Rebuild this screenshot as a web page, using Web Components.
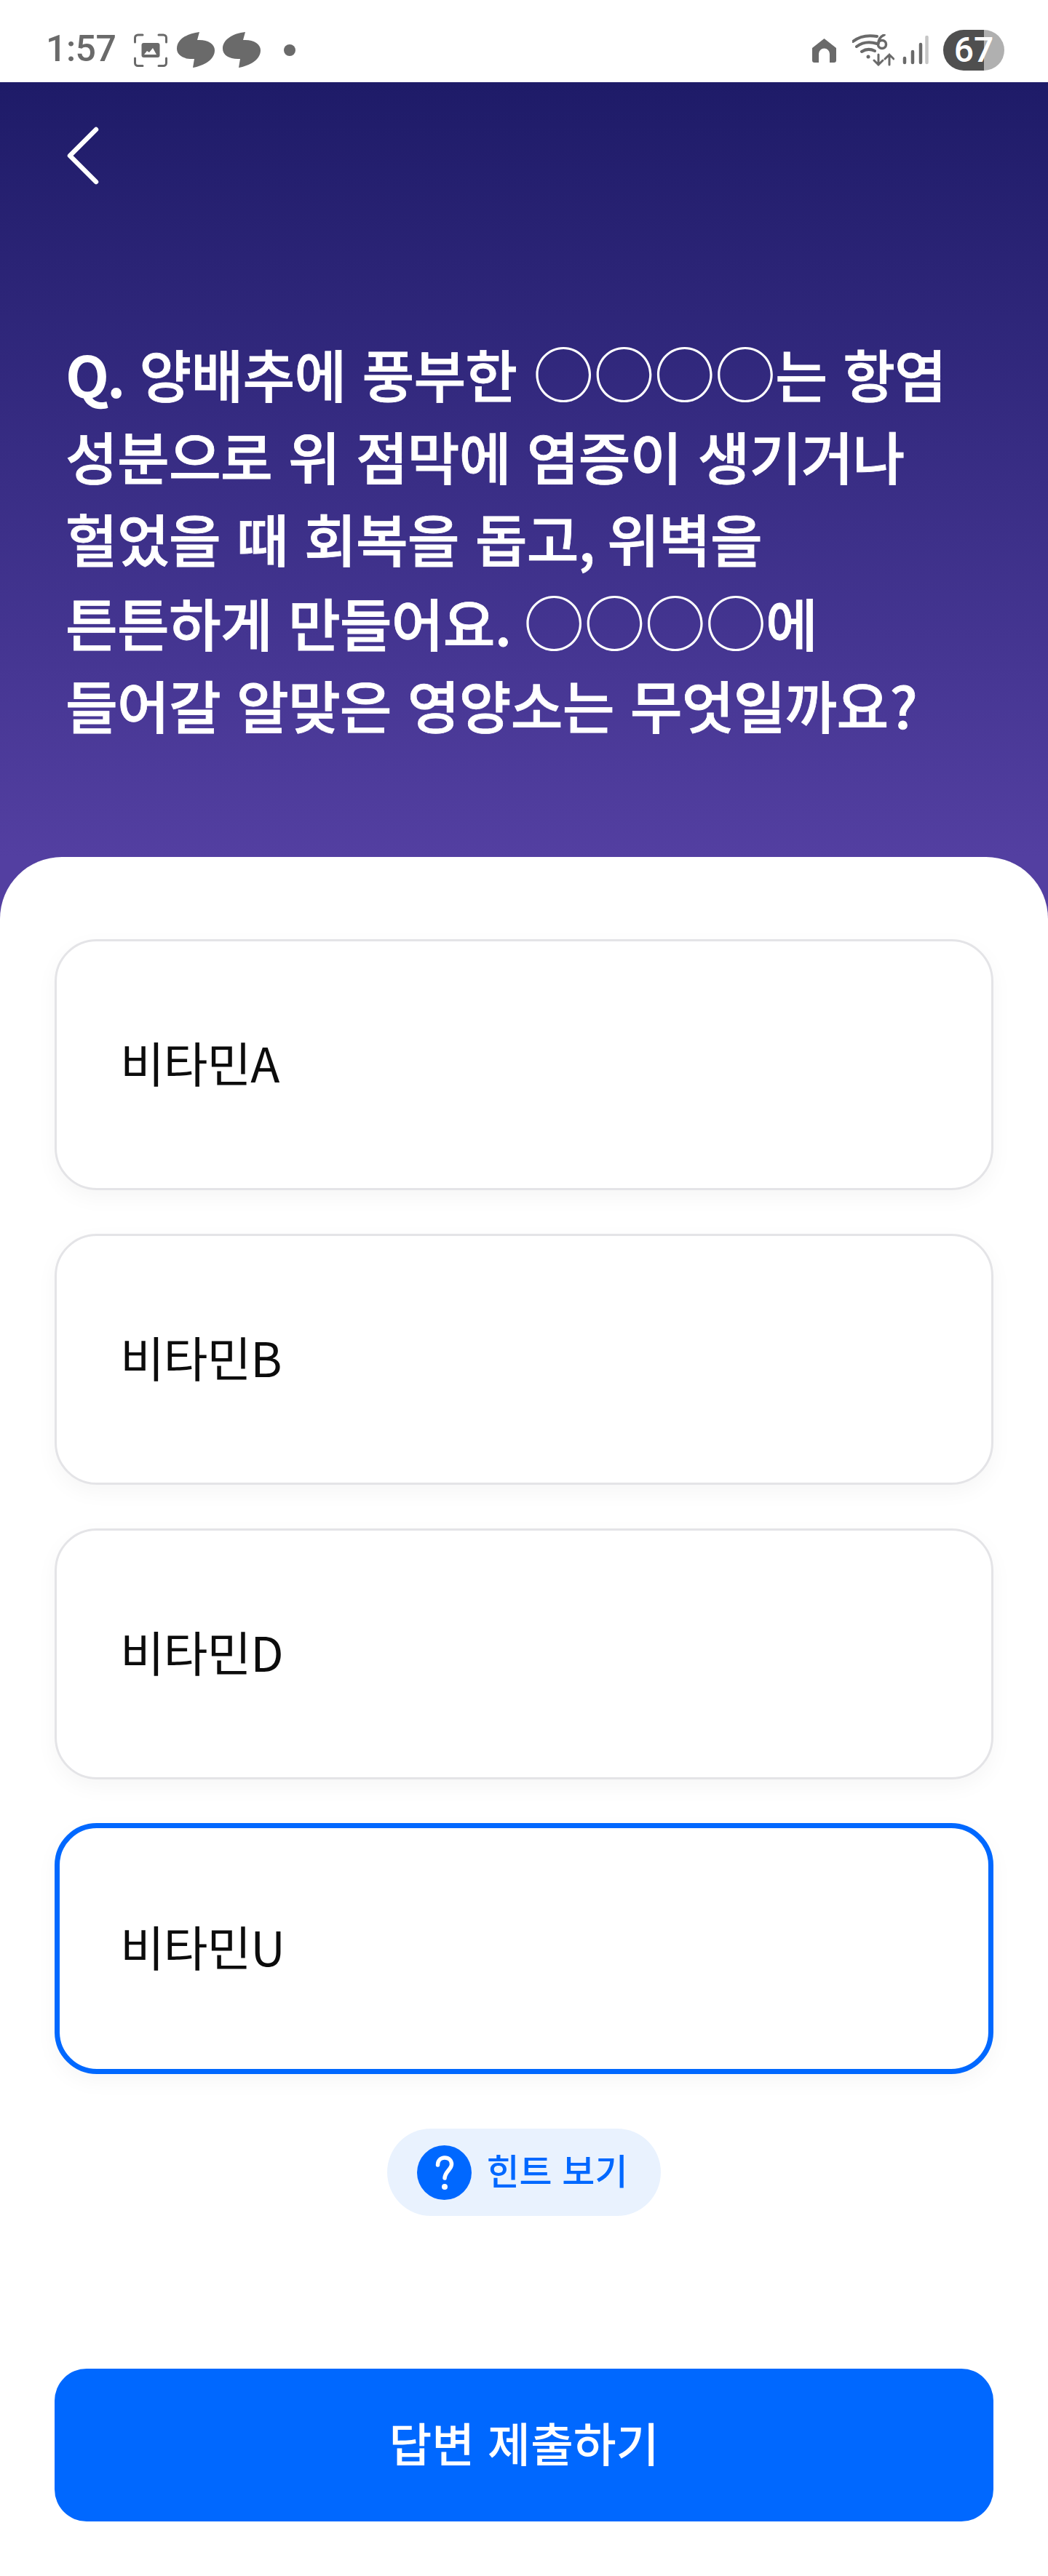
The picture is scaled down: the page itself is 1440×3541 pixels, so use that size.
<!DOCTYPE html>
<html lang="ko"><head><meta charset="utf-8"><style>
html,body{margin:0;padding:0;background:#fff}
body{font-family:"Noto Sans CJK KR","Noto Sans",sans-serif}
.q{font-weight:700;letter-spacing:-3px;-webkit-text-stroke:0}
.c{font-size:84px;font-weight:400;-webkit-text-stroke:0}
.c4{margin-left:-5px}
.n{letter-spacing:-6px}
.w{margin-left:2px}
</style></head><body>
<quiz-app>
<status-bar slot="status"></status-bar>
<quiz-header slot="header"><span class="q">Q.</span> 양배추에 풍부한 <span class="c">○○○○</span>는 항염<br>성분으로 위 점막에 염증이 생기거나<br>헐었을 때 회복을 돕고<span class="n">,</span> 위벽을<br>튼튼하게 만들어요. <span class="c c4">○○○○</span>에<br>들어갈 알맞은 영양소는 무엇일까요<span class="w">?</span></quiz-header>
<answer-option>비타민A</answer-option>
<answer-option>비타민B</answer-option>
<answer-option>비타민D</answer-option>
<answer-option selected>비타민U</answer-option>
<hint-pill slot="hint">힌트 보기</hint-pill>
<submit-button slot="submit">답변 제출하기</submit-button>
</quiz-app>
<script>
function def(name,html){customElements.define(name,class extends HTMLElement{constructor(){super();this.attachShadow({mode:'open'}).innerHTML=html}})}
def('quiz-app',`<style>
:host{display:block;width:1440px;height:3541px;overflow:hidden;background:#fff}
.sheet{position:relative;background:#fff;border-radius:85px 85px 0 0;margin-top:-85px;padding:113px 75px 0;display:flex;flex-direction:column;box-sizing:border-box}
.opts{display:flex;flex-direction:column;gap:60px}
.hint{display:flex;justify-content:center;margin-top:75px}
.sub{margin-top:210px}
</style><slot name="status"></slot><slot name="header"></slot>
<div class="sheet"><div class="opts"><slot></slot></div><div class="hint"><slot name="hint"></slot></div><div class="sub"><slot name="submit"></slot></div></div>`);
def('status-bar',`<style>
:host{display:flex;align-items:center;height:113px;box-sizing:border-box;padding:25px 60px 0 63px;background:#fff;color:#6a6a6a}
.t{font:500 50px/1 Roboto,sans-serif;width:121px;letter-spacing:-.5px;margin-top:-4px}
svg{display:block;flex:none}
.sp{flex:1}
.bat{width:84px;height:56px;border-radius:28px;background:linear-gradient(90deg,#4f4f4f 0 56px,#b0b0b0 56px);color:#fff;font:500 48px/56px Roboto,sans-serif;text-align:center;margin-left:20px}
</style><span class="t">1:57</span>
<svg width="46" height="46" viewBox="0 0 46 46" fill="none" stroke="#6a6a6a" stroke-width="3" stroke-linecap="round"><path d="M1.5 12V6a4 4 0 0 1 4-4H12M34 2h6.500a4 4 0 0 1 4 4v6M1.500 34v6.500a4 4 0 0 0 4 4H12M34 44.500h6.500a4 4 0 0 0 4-4V34"/><rect x="10.500" y="13" width="25" height="20" rx="3" fill="#6a6a6a" stroke="none"/><path d="M14 29l4-5 3 2 5-6 5 9z" fill="#fff" stroke="none"/></svg>
<svg width="52" height="50" viewBox="0 0 52 50" style="margin-left:13px"><path d="M31 0 L28 11 C42 10 52 16 52 25 C52 38 38 46 22 49 L24 37 C10 38 0 32 0 23 C0 10 14 2 31 0Z" fill="#6a6a6a"/></svg>
<svg width="52" height="50" viewBox="0 0 52 50" style="margin-left:11px"><path d="M31 0 L28 11 C42 10 52 16 52 25 C52 38 38 46 22 49 L24 37 C10 38 0 32 0 23 C0 10 14 2 31 0Z" fill="#6a6a6a"/></svg>
<svg width="16" height="16" style="margin-left:32px"><circle cx="8" cy="8" r="8" fill="#6a6a6a"/></svg>
<span class="sp"></span>
<svg width="33" height="33" viewBox="0 0 33 33"><path d="M16.500 0 L33 13 V30 a3 3 0 0 1-3 3 H24 V21 a7.500 7.500 0 0 0-15 0 V33 H3 a3 3 0 0 1-3-3 V13Z" fill="#6a6a6a"/></svg>
<svg width="58" height="44" viewBox="0 0 58 44" style="margin-left:22px" fill="none" stroke="#6a6a6a" stroke-width="4" stroke-linecap="round"><path d="M1 10C11 2 22 1 34 3M6 17C14 11 24 10 34 13M13 24C19 20 25 20 31 23"/><circle cx="22" cy="31" r="2.500" fill="#6a6a6a" stroke="none"/><circle cx="41" cy="14" r="5.500" stroke-width="3.500"/><path d="M36 13C36 7 39 3 44 1" stroke-width="3.500"/><path d="M36 28V42M30 36l6 6 6-6M51 42V28M45 34l6-6 6 6" stroke-width="3"/></svg>
<svg width="36" height="40" viewBox="0 0 36 40" style="margin-left:11px" stroke-width="4.500" stroke-linecap="round"><path d="M3 31v6M14 22v15M25 12v25" stroke="#6a6a6a"/><path d="M33.500 2v35" stroke="#c6c6c6"/></svg>
<span class="bat">67</span>`);
def('quiz-header',`<style>
:host{display:block;height:1150px;box-sizing:border-box;padding:0 0 0 90px;background:linear-gradient(180deg,#1e1b68 0,#533fa1 1065px);color:#fff;position:relative}
svg{display:block;position:absolute;left:90px;top:60px}
p{margin:0;padding-top:341px;font:500 78px/113px "Noto Sans CJK KR",sans-serif;letter-spacing:-.8px;word-spacing:1px;-webkit-text-stroke:.8px #fff}
</style>
<svg width="50" height="82" viewBox="0 0 50 82" fill="none" stroke="#fff" stroke-width="6.500" stroke-linecap="round" stroke-linejoin="round"><path d="M42 5L6 41l36 36" /></svg>
<p><slot></slot></p>`);
def('answer-option',`<style>
:host{display:flex;align-items:center;height:345px;box-sizing:border-box;border:3px solid #e4e4e7;border-radius:58px;background:#fff;padding:0 0 10px 87px;box-shadow:0 10px 30px rgba(0,0,0,.04);color:#0c0c0c;font:400 66px/1 "Noto Sans CJK KR",sans-serif;letter-spacing:-1px}
:host([selected]){border:7px solid #0068ff;padding-left:83px}
</style><slot></slot>`);
def('hint-pill',`<style>
:host{display:inline-flex;align-items:center;gap:20px;height:120px;box-sizing:border-box;padding:0 45px 0 41px;border-radius:60px;background:#e9f2fe;color:#0068ff;font:500 49px/1 "Noto Sans CJK KR",sans-serif}
svg{display:block}
span{padding-bottom:9px}
</style><svg width="75" height="75" viewBox="0 0 75 75"><circle cx="37.500" cy="37.500" r="37.500" fill="#0068ff"/><path d="M28.500 27c0-6 4-10 9.500-10s9.500 3.500 9.500 9c0 7-9 10-9.500 19" fill="none" stroke="#fff" stroke-width="5.500" stroke-linecap="round"/><circle cx="38" cy="57" r="4" fill="#fff"/></svg><span><slot></slot></span>`);
def('submit-button',`<style>
:host{display:flex;align-items:center;justify-content:center;height:210px;box-sizing:border-box;padding-bottom:10px;border-radius:44px;background:#0068ff;color:#fff;font:500 64px/1 "Noto Sans CJK KR",sans-serif}
</style><slot></slot>`);
</script></body></html>
